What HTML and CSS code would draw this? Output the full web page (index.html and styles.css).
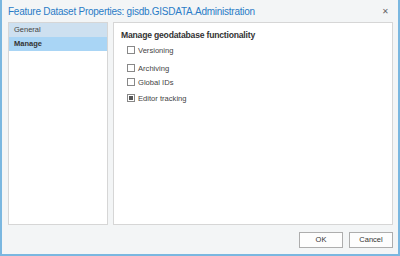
FILE: index.html
```html
<!DOCTYPE html>
<html lang="en">
<head>
    <meta charset="UTF-8">
    <title>Feature Dataset Properties</title>
    <link rel="stylesheet" href="styles.css">
</head>
<body>
    <div class="dialog">
        <div class="titlebar">
            <span class="title">Feature Dataset Properties: gisdb.GISDATA.Administration</span>
            <span class="close">&#x2715;</span>
        </div>

        <div class="content">
            <ul class="nav-list">
                <li class="nav-item">General</li>
                <li class="nav-item active">Manage</li>
            </ul>

            <div class="page">
                <h3>Manage geodatabase functionality</h3>
                <label class="check"><span class="box"></span>Versioning</label>
                <label class="check archiving"><span class="box"></span>Archiving</label>
                <label class="check"><span class="box"></span>Global IDs</label>
                <label class="check tracking"><span class="box checked"></span>Editor tracking</label>
            </div>
        </div>

        <div class="footer">
            <button>OK</button>
            <button>Cancel</button>
        </div>
    </div>
</body>
</html>
```

FILE: styles.css
```css
* {
    margin: 0;
    padding: 0;
    box-sizing: border-box;
    font-family: 'Liberation Sans', Arial, sans-serif;
}

body {
    background: #f3f5f6;
}

.dialog {
    width: 400px;
    height: 256px;
    display: flex;
    flex-direction: column;
    background: #f3f5f6;
    border: 2px solid #7ab7e0;
    border-top: none;
}

.titlebar {
    height: 22px;
    display: flex;
    align-items: center;
    justify-content: space-between;
    padding: 0 9px 0 6px;
}

.title {
    font-size: 10px;
    letter-spacing: -0.25px;
    color: #2a7cc7;
}

.close {
    font-size: 8px;
    color: #666;
}

.content {
    flex: 1;
    display: flex;
    gap: 5px;
    padding: 0 5px 0 6px;
}

.nav-list {
    list-style: none;
    width: 100px;
    background: #fff;
    border: 1px solid #d6d6d6;
}

.nav-item {
    height: 14px;
    line-height: 14px;
    padding-left: 5px;
    font-size: 7.5px;
    color: #444;
    background: #cde0f0;
}

.nav-item.active {
    background: #a9d5f5;
    font-weight: bold;
    color: #333;
}

.page {
    flex: 1;
    background: #fff;
    border: 1px solid #d6d6d6;
    padding: 7px 0 0 7px;
}

.page h3 {
    font-size: 8.6px;
    letter-spacing: -0.2px;
    font-weight: bold;
    color: #333;
    margin-bottom: 3px;
}

.check {
    display: flex;
    align-items: center;
    gap: 3px;
    height: 14px;
    margin-left: 6px;
    font-size: 7.6px;
    color: #444;
}

.check.archiving {
    margin-top: 4px;
}

.check.tracking {
    margin-top: 2px;
}

.box {
    width: 8px;
    height: 8px;
    border: 1px solid #888;
    background: #fff;
    display: flex;
    align-items: center;
    justify-content: center;
}

.box.checked::after {
    content: '';
    width: 4px;
    height: 4px;
    background: #555;
}

.footer {
    height: 29px;
    display: flex;
    justify-content: flex-end;
    align-items: center;
    gap: 6px;
    padding-right: 5px;
}

button {
    width: 44px;
    height: 16px;
    border: 1px solid #adadad;
    background: #fdfdfd;
    font-size: 7.5px;
    color: #333;
}
```
